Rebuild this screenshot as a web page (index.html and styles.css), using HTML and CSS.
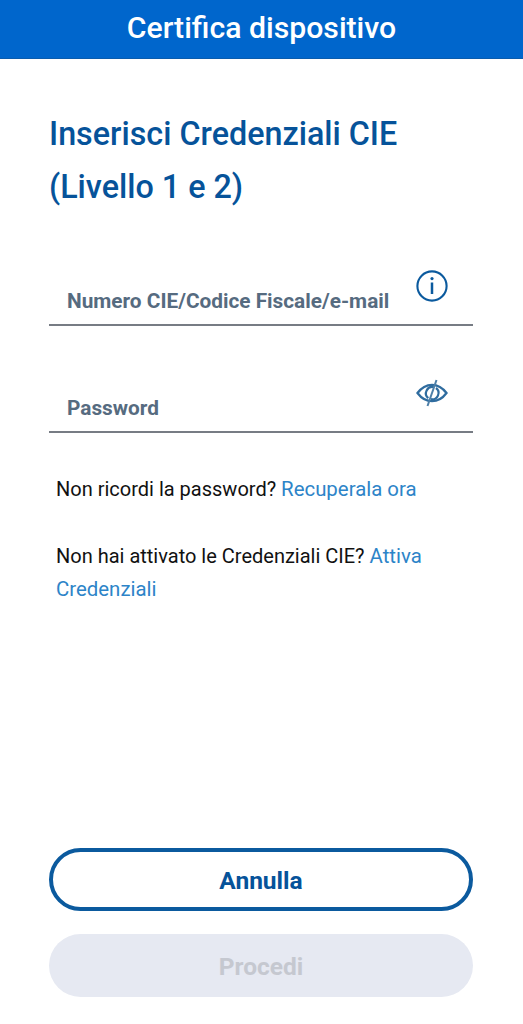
FILE: index.html
```html
<!DOCTYPE html>
<html lang="it">
<head>
<meta charset="utf-8">
<title>Certifica dispositivo</title>
<link rel="stylesheet" href="styles.css">
</head>
<body>
<div class="screen">
  <header class="topbar">Certifica dispositivo</header>
  <main class="content">
    <h1 class="heading">Inserisci Credenziali CIE<br>(Livello 1 e 2)</h1>
    <div class="field field-first">
      <span class="field-label">Numero CIE/Codice Fiscale/e-mail</span>
      <svg class="field-icon icon-info" viewBox="0 0 32 32" width="32" height="32" aria-hidden="true">
        <circle cx="16" cy="16" r="14.6" fill="none" stroke="#0b5a9e" stroke-width="2.1"/>
        <circle cx="16" cy="8.6" r="1.6" fill="#0b5a9e"/>
        <path d="M16 12.500V24" fill="none" stroke="#0b5a9e" stroke-width="2.500"/>
      </svg>
    </div>
    <div class="field">
      <span class="field-label">Password</span>
      <svg class="field-icon icon-eye" viewBox="0 0 32 28" width="32" height="28" aria-hidden="true">
        <path d="M1.500 14C5.500 8.600 10.500 5.800 16 5.800S26.500 8.600 30.500 14C26.500 19.400 21.500 22.200 16 22.200S5.500 19.400 1.500 14Z" fill="none" stroke="#2f6c9f" stroke-width="2.300"/>
        <path d="M12.300 19.200A6.300 6.300 0 0 1 17.800 8.200M20 9A6.300 6.300 0 0 1 15 20.200" fill="none" stroke="#2f6c9f" stroke-width="2.200"/>
        <path d="M20.500 1L11.500 27" fill="none" stroke="#4d7fa8" stroke-width="2"/>
      </svg>
    </div>
    <p class="note note-first">Non ricordi la password? <a class="link" href="#">Recuperala ora</a></p>
    <p class="note">Non hai attivato le Credenziali CIE? <a class="link" href="#">Attiva Credenziali</a></p>
  </main>
  <footer class="actions">
    <button class="btn btn-outline" type="button">Annulla</button>
    <button class="btn btn-disabled" type="button">Procedi</button>
  </footer>
</div>
</body>
</html>
```
FILE: styles.css
```css
* { box-sizing: border-box; }
html, body { margin: 0; padding: 0; background: #fff; }
body { font-family: Roboto, "Noto Sans", sans-serif; overflow: hidden; }
.screen { display: flex; flex-direction: column; height: 1024px; width: 523px; }
.topbar {
  height: 59px;
  background: #0066cc;
  border-bottom: 1px solid #0a5cad;
  color: #fff;
  font-size: 30.200px;
  font-weight: 500;
  line-height: 56px;
  text-align: center;
}
.content { flex: 1; padding: 49px 50px 0 49px; }
.heading {
  margin: 0;
  color: #06539a;
  font-size: 32.300px;
  font-weight: 500;
  line-height: 53px;
}
.field {
  display: flex;
  align-items: flex-end;
  justify-content: space-between;
  height: 62px;
  margin-top: 45px;
  padding: 0 25px 8px 18px;
  border-bottom: 2px solid #777c84;
}
.field-first { margin-top: 50px; }
.field-label { color: #566b80; font-size: 20.800px; font-weight: 700; line-height: 30px; }
.field-icon { flex: none; align-self: flex-start; }
.icon-info { margin-top: 6px; }
.icon-eye { margin-top: 8px; }
.note { margin: 34px 0 0 7px; color: #111; font-size: 20px; line-height: 33px; }
.note-first { margin-top: 40px; }
.link { color: #2d84c8; font-size: 20.400px; text-decoration: none; }
.actions { display: flex; flex-direction: column; gap: 23px; padding: 0 50px 27px 49px; }
.btn {
  display: block;
  width: 100%;
  height: 63px;
  padding: 2px 0 0;
  border-radius: 32px;
  font-family: inherit;
  font-size: 24.500px;
  font-weight: 700;
}
.btn-outline { background: #fff; border: 4px solid #0b5a9e; color: #06539a; }
.btn-disabled { background: #e6e9f2; border: 0; color: #c5c8d0; }
```
